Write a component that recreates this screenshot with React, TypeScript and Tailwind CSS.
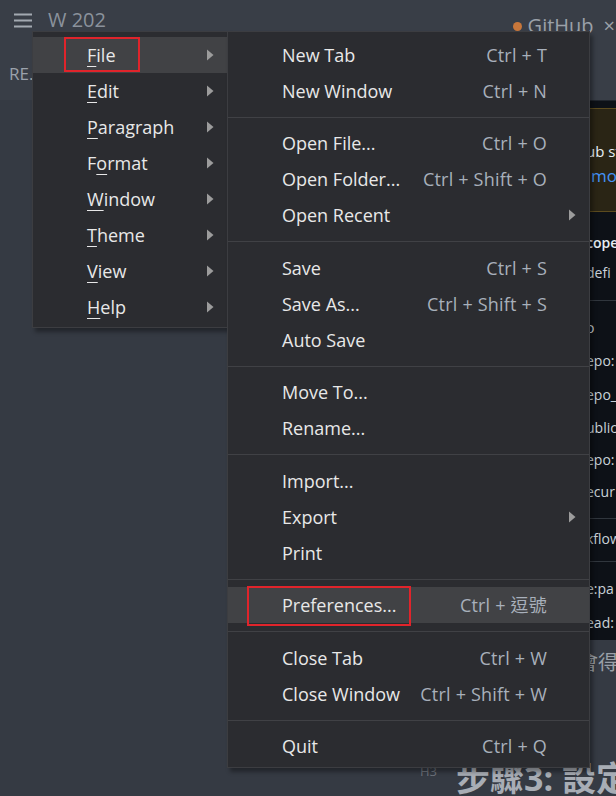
import React from 'react'

type Row = { label: React.ReactNode; keys?: string; sub?: boolean; active?: boolean; boxed?: boolean }

const fileMenu: Row[][] = [
  [
    { label: 'New Tab', keys: 'Ctrl + T' },
    { label: 'New Window', keys: 'Ctrl + N' },
  ],
  [
    { label: 'Open File...', keys: 'Ctrl + O' },
    { label: 'Open Folder...', keys: 'Ctrl + Shift + O' },
    { label: 'Open Recent', sub: true },
  ],
  [
    { label: 'Save', keys: 'Ctrl + S' },
    { label: 'Save As...', keys: 'Ctrl + Shift + S' },
    { label: 'Auto Save' },
  ],
  [{ label: 'Move To...' }, { label: 'Rename...' }],
  [{ label: 'Import...' }, { label: 'Export', sub: true }, { label: 'Print' }],
  [{ label: 'Preferences...', keys: 'Ctrl + 逗號', active: true, boxed: true }],
  [
    { label: 'Close Tab', keys: 'Ctrl + W' },
    { label: 'Close Window', keys: 'Ctrl + Shift + W' },
  ],
  [{ label: 'Quit', keys: 'Ctrl + Q' }],
]

// mnemonic letter is underlined
const topMenu: { pre: string; u: string; post: string }[] = [
  { pre: '', u: 'F', post: 'ile' },
  { pre: '', u: 'E', post: 'dit' },
  { pre: '', u: 'P', post: 'aragraph' },
  { pre: 'F', u: 'o', post: 'rmat' },
  { pre: '', u: 'W', post: 'indow' },
  { pre: '', u: 'T', post: 'heme' },
  { pre: '', u: 'V', post: 'iew' },
  { pre: '', u: 'H', post: 'elp' },
]

function Arrow() {
  return (
    <svg width="8" height="12" viewBox="0 0 8 12" className="shrink-0">
      <path d="M1 0.5 L7.5 6 L1 11.5 Z" fill="#9c9c9c" />
    </svg>
  )
}

function Hamburger() {
  return (
    <svg width="18" height="15" viewBox="0 0 18 15">
      <path d="M0 1.5 H18 M0 7.5 H18 M0 13.5 H18" stroke="#a3a9b1" strokeWidth="2" />
    </svg>
  )
}

// strip of the GitHub page peeking out right of the submenu
const peek: { t: string; h: number; cls?: string }[] = [
  { t: 'copes', h: 30, cls: 'font-semibold text-[#e6edf3]' },
  { t: 'defi', h: 30, cls: 'text-[#c9d1d9]' },
  { t: '', h: 24 },
  { t: 'o', h: 32, cls: 'text-[#c9d1d9]' },
  { t: 'epo:', h: 34, cls: 'text-[#c9d1d9]' },
  { t: 'epo_', h: 34, cls: 'text-[#c9d1d9]' },
  { t: 'ublic', h: 32, cls: 'text-[#c9d1d9]' },
  { t: 'epo:', h: 32, cls: 'text-[#c9d1d9]' },
  { t: 'ecur', h: 32, cls: 'text-[#c9d1d9]' },
  { t: '', h: 20 },
  { t: 'kflow', h: 22, cls: 'text-[#c9d1d9]' },
  { t: '', h: 22 },
  { t: 'e:pa', h: 34, cls: 'text-[#c9d1d9]' },
  { t: 'ead:', h: 34, cls: 'text-[#c9d1d9]' },
]

export default function App() {
  return (
    <div
      className="relative w-[616px] h-[796px] overflow-hidden bg-[#353a43] flex flex-col"
      style={{ fontFamily: '"Open Sans", "Noto Sans", "Noto Sans CJK TC", sans-serif' }}
    >
      {/* Window header */}
      <div className="h-[40px] shrink-0 bg-[#393e47] flex items-center pl-[14px]">
        <Hamburger />
        <span className="ml-[16px] text-[20px] text-[#8b929c] -mt-[1px]">W 202</span>
        <div className="ml-auto flex items-center mt-[12px] mr-[1px]">
          <span className="w-[9px] h-[9px] rounded-full bg-[#c8773b] mr-[6px]" />
          <span className="text-[20px] text-[#9ba1a9]">GitHub</span>
          <span className="ml-[10px] text-[20px] text-[#9ba1a9]">×</span>
        </div>
      </div>
      <div className="h-[60px] shrink-0 bg-[#393e47] flex items-center pl-[9px]">
        <span className="text-[17px] text-[#9ba2ac] mt-[8px]">RE.</span>
      </div>

      {/* Document area */}
      <div className="flex-1 flex flex-col">
        <div className="flex">
          <div className="flex-1" />
          <div className="w-[60px] h-[540px] bg-[#0d1117] border-t border-[#21262d] flex flex-col text-[14px] leading-none whitespace-nowrap">
            <div className="mt-[7px] h-[105px] bg-[#2a2515] border-y border-[#5c4b1e] flex flex-col pl-[30px] pt-[35px]">
              <span className="text-[#e6edf3] text-[15px]">ub st</span>
              <span className="mt-[8px] pl-[5px] text-[#4493f8] text-[17px]">mo</span>
            </div>
            <div className="flex flex-col pl-[30px] pt-[16px]">
              {peek.map((p, i) =>
                p.t ? (
                  <div key={i} style={{ height: p.h }} className={`flex items-center ${p.cls}`}>
                    {p.t}
                  </div>
                ) : (
                  <div key={i} style={{ height: p.h }} className="flex items-center -ml-[30px]">
                    <div className="w-full h-px bg-[#30363d]" />
                  </div>
                ),
              )}
            </div>
          </div>
        </div>
        <div className="h-[36px] flex items-end justify-end">
          <span className="text-[20px] text-[#9aa0a8] -mr-[2px] -mb-[2px]">會得</span>
        </div>
        <div className="flex-1 flex items-end pl-[420px]">
          <span className="text-[13px] text-[#6d727b] mb-[15px]">H3</span>
          <span className="ml-[19px] text-[34px] font-bold text-[#a8adb5] whitespace-nowrap -mb-[8px]">步驟3: 設定</span>
        </div>
      </div>

      {/* Top-level menu */}
      <div className="absolute left-[32px] top-[31px] w-[198px] bg-[#2b2c30] border border-[#3c3d41] pt-[5px] pb-[2px] shadow-[3px_4px_4px_rgba(0,0,0,0.35)]">
        {topMenu.map((m, i) => (
          <div
            key={i}
            className={`relative h-[36px] flex items-center pl-[54px] pr-[12px] text-[18px] text-[#e8e8e8] ${i === 0 ? 'bg-[#414245]' : ''}`}
          >
            {i === 0 && <div className="absolute left-[31px] top-0 w-[76px] h-[35px] border-2 border-[#e0242b]" />}
            <span className="flex-1">
              {m.pre}
              <span className="underline underline-offset-[4px] decoration-1">{m.u}</span>
              {m.post}
            </span>
            <span className="mr-[3px]">
              <Arrow />
            </span>
          </div>
        ))}
      </div>

      {/* File submenu */}
      <div className="absolute left-[227px] top-[31px] w-[363px] bg-[#2b2c30] border border-[#3c3d41] pt-[5px] pb-[3px] shadow-[3px_4px_4px_rgba(0,0,0,0.35)]">
        {fileMenu.map((group, gi) => (
          <div key={gi}>
            {gi > 0 && (
              <div className={`${gi % 2 === 0 ? 'h-[17px]' : 'h-[16px]'} flex items-center`}>
                <div className="w-full h-px bg-[#404145]" />
              </div>
            )}
            {group.map((r, ri) => (
              <div
                key={ri}
                className={`relative h-[36px] flex items-center pl-[54px] text-[18px] text-[#e8e8e8] ${r.sub ? 'pr-[13px]' : 'pr-[42px]'} ${r.active ? 'bg-[#414245]' : ''}`}
              >
                {r.boxed && <div className="absolute left-[19px] -top-px w-[164px] h-[40px] border-2 border-[#e0242b]" />}
                <span className="flex-1 whitespace-nowrap">{r.label}</span>
                {r.keys && <span className="whitespace-nowrap text-[#a8b0bb] tracking-[0.2px]">{r.keys}</span>}
                {r.sub && <Arrow />}
              </div>
            ))}
          </div>
        ))}
      </div>
    </div>
  )
}
